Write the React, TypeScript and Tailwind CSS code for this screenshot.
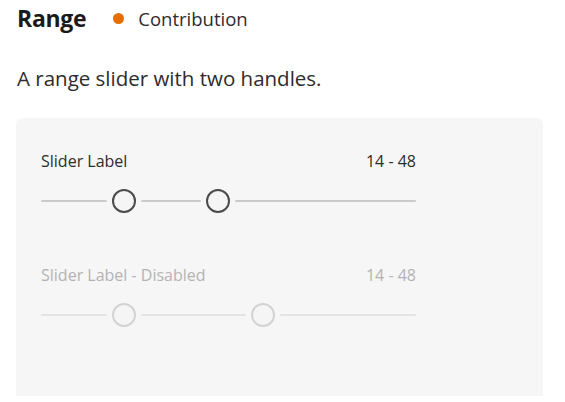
import React from "react";

interface RangeSliderProps {
  label: string;
  value: string;
  disabled?: boolean;
  // width (px) of the track between the two handles
  middle: number;
}

function Handle({ disabled }: { disabled?: boolean }) {
  return (
    <div
      className={
        "h-[24px] w-[24px] shrink-0 rounded-full border-2 bg-[#f5f5f5] " +
        (disabled ? "border-[#d3d3d3]" : "border-[#4b4b4b]")
      }
    />
  );
}

function RangeSlider({ label, value, disabled, middle }: RangeSliderProps) {
  const track = disabled ? "bg-[#e3e3e3]" : "bg-[#cacaca]";
  return (
    <div className="w-[375px]">
      <div
        className={
          "flex h-[22px] items-center justify-between text-[16px] leading-[22px] " +
          (disabled ? "text-[#b3b3b3]" : "text-[#2c2c2c]")
        }
      >
        <span>{label}</span>
        <span>{value}</span>
      </div>
      <div className="mt-[17px] flex h-[24px] items-center gap-[5px]">
        <div className={"h-[2px] w-[66px] shrink-0 rounded-full " + track} />
        <Handle disabled={disabled} />
        <div className={"h-[2px] shrink-0 rounded-full " + track} style={{ width: middle }} />
        <Handle disabled={disabled} />
        <div className={"h-[2px] flex-1 rounded-full " + track} />
      </div>
    </div>
  );
}

export default function App() {
  return (
    <div className="min-h-screen bg-white font-['Open_Sans',sans-serif] text-[#222]">
      <div className="px-[17px]">
        <div className="flex h-[37px] items-center">
          <h1 className="text-[23px] font-bold tracking-[-0.3px] text-[#1a1a1a]">Range</h1>
          <span className="ml-[27px] h-[11px] w-[11px] rounded-full bg-[#e46f00]" />
          <span className="ml-[14px] text-[18.5px] text-[#2c2c2c]">Contribution</span>
        </div>
        <p className="mt-[27px] text-[20.5px] leading-[28px] text-[#2c2c2c]">
          A range slider with two handles.
        </p>
      </div>

      {/* Demo panel */}
      <div className="mx-[16px] mt-[26px] w-[527px] rounded-t-md bg-[#f6f6f6] pl-[25px] pt-[32px] pb-[69px]">
        <RangeSlider label="Slider Label" value="14 - 48" middle={60} />
        <div className="mt-[51px]">
          <RangeSlider label="Slider Label - Disabled" value="14 - 48" disabled middle={105} />
        </div>
      </div>
    </div>
  );
}
